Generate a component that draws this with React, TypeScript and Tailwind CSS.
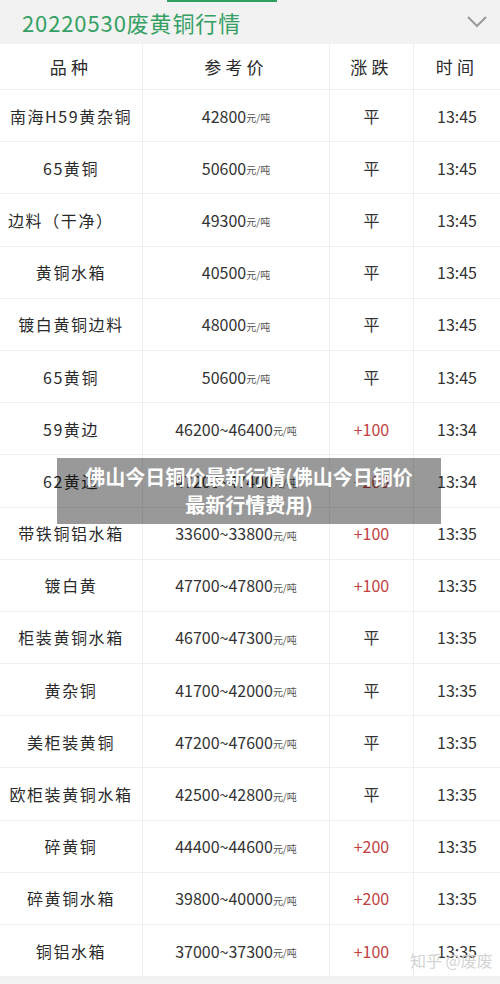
const rows = [
  { name: '南海H59黄杂铜', price: '42800', change: '平', time: '13:45' },
  { name: '65黄铜', price: '50600', change: '平', time: '13:45' },
  { name: '边料（干净）', price: '49300', change: '平', time: '13:45', left: true },
  { name: '黄铜水箱', price: '40500', change: '平', time: '13:45' },
  { name: '镀白黄铜边料', price: '48000', change: '平', time: '13:45' },
  { name: '65黄铜', price: '50600', change: '平', time: '13:45' },
  { name: '59黄边', price: '46200~46400', change: '+100', time: '13:34' },
  { name: '62黄边', price: '47200~47400', change: '+200', time: '13:34' },
  { name: '带铁铜铝水箱', price: '33600~33800', change: '+100', time: '13:35' },
  { name: '镀白黄', price: '47700~47800', change: '+100', time: '13:35' },
  { name: '柜装黄铜水箱', price: '46700~47300', change: '平', time: '13:35' },
  { name: '黄杂铜', price: '41700~42000', change: '平', time: '13:35' },
  { name: '美柜装黄铜', price: '47200~47600', change: '平', time: '13:35' },
  { name: '欧柜装黄铜水箱', price: '42500~42800', change: '平', time: '13:35' },
  { name: '碎黄铜', price: '44400~44600', change: '+200', time: '13:35' },
  { name: '碎黄铜水箱', price: '39800~40000', change: '+200', time: '13:35' },
  { name: '铜铝水箱', price: '37000~37300', change: '+100', time: '13:35' },
]

const cell = 'flex items-center justify-center border-r border-b border-[#efefef]'

export default function App() {
  return (
    <div className="relative w-[500px] h-[984px] overflow-hidden bg-white font-['Noto_Sans_CJK_SC','Noto_Sans',sans-serif] text-[#2a2a2a]">
      {/* Title bar */}
      <div className="relative flex items-center justify-between h-[44px] bg-[#f2f2f2] pl-[22px] pr-[12px]">
        <span className="absolute top-0 left-[167px] w-[110px] h-[2px] bg-[#2fa05f]" />
        <h1 className="text-[22px] leading-none text-[#34a063] tracking-[0.04em]">
          20220530废黄铜行情
        </h1>
        <svg width="22" height="14" viewBox="0 0 22 14" fill="none" stroke="#9a9a9a" strokeWidth="2">
          <path d="M2 2l9 9 9-9" />
        </svg>
      </div>

      {/* Table */}
      <div className="grid grid-cols-[143px_187px_84px_86px]">
        <div className={`${cell} h-[46px] text-[17px] tracking-[0.25em]`}>品种</div>
        <div className={`${cell} h-[46px] text-[17px] tracking-[0.25em]`}>参考价</div>
        <div className={`${cell} h-[46px] text-[17px] tracking-[0.25em]`}>涨跌</div>
        <div className={`${cell} h-[46px] text-[17px] tracking-[0.25em] border-r-0`}>时间</div>
        {rows.map((r, i) => (
          <div key={i} className="contents">
            <div
              className={`${cell} h-[52.2px] overflow-hidden whitespace-nowrap text-[16px] tracking-[0.1em] ${
                r.left ? 'justify-start pl-[8px]' : ''
              }`}
            >
              {r.name}
            </div>
            <div className={`${cell} h-[52.2px] whitespace-nowrap`}>
              <span className="text-[16px] text-[#333]">{r.price}</span>
              <span className="text-[10px] text-[#555] mt-[4px]">元/吨</span>
            </div>
            <div
              className={`${cell} h-[52.2px] text-[16px] ${
                r.change === '平' ? 'text-[#333]' : 'text-[#c0413f]'
              }`}
            >
              {r.change}
            </div>
            <div className={`${cell} h-[52.2px] border-r-0 text-[16px] text-[#333]`}>{r.time}</div>
          </div>
        ))}
      </div>
      <div className="h-[8px] bg-[#f2f2f2]" />

      {/* Overlay caption */}
      <div className="absolute left-[57px] top-[458px] w-[384px] h-[66px] bg-black/40 flex items-center justify-center px-2">
        <p className="text-center text-white font-bold text-[20px] leading-[28px]">
          佛山今日铜价最新行情(佛山今日铜价
          <br />
          最新行情费用)
        </p>
      </div>

      {/* Watermark */}
      <div className="absolute left-[410px] top-[948px] text-[16px] text-[#d4d4d4] whitespace-nowrap">
        知乎 @废废
      </div>
    </div>
  )
}
